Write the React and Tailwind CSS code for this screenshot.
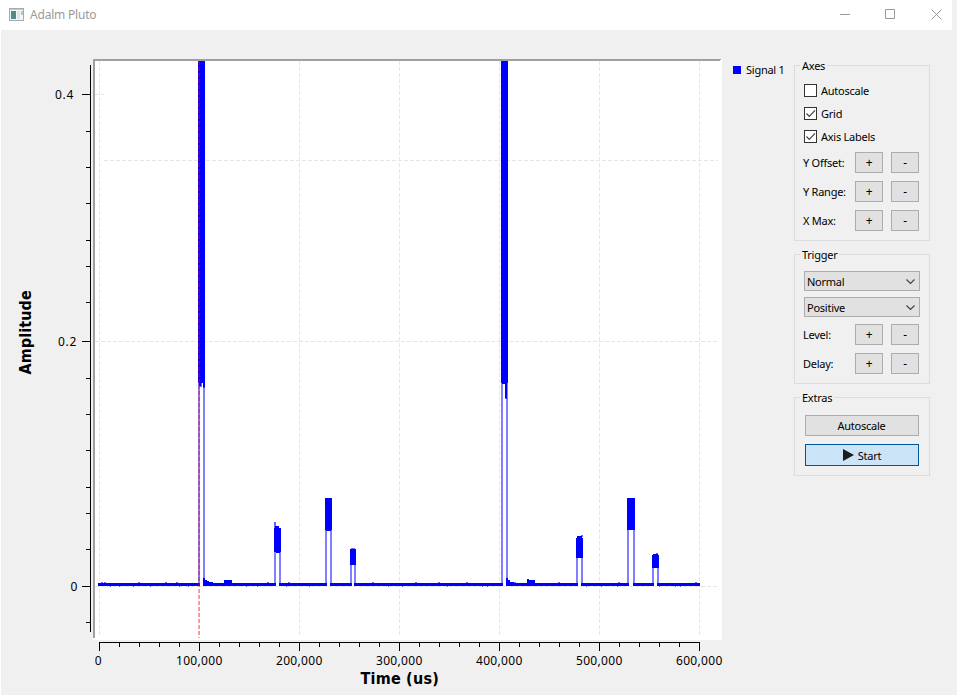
import React, { useState } from 'react';

const X_TICKS = [
  { x: 98.5, label: '0' },
  { x: 199.5, label: '100,000' },
  { x: 299.5, label: '200,000' },
  { x: 399.5, label: '300,000' },
  { x: 499.5, label: '400,000' },
  { x: 599.5, label: '500,000' },
  { x: 699.5, label: '600,000' }
];

const Y_TICKS = [
  { y: 64.5, label: '0.4', end: 73, width: 18 },
  { y: 311.5, label: '0.2', end: 76, width: 18 },
  { y: 556.5, label: '0', end: 77, width: 7 }
];

const Y_MINOR = [101.5, 137.5, 173.5, 210.5, 236.5, 272.5, 348.5, 384.5, 420.5, 457.5, 483.5, 519.5, 592.5];

const X_MINOR = [];
for (let i = 0; i < 30; i++) {
  if (i % 5 !== 0) X_MINOR.push(99.5 + i * 20);
}

// left, right, top and bottom of the solid part of each pulse
const PULSES = [
  { l: 198, r: 205, top: 31, bottom: 353 },
  { l: 274, r: 281, top: 498, bottom: 522 },
  { l: 325, r: 332, top: 468, bottom: 500 },
  { l: 350, r: 356, top: 519, bottom: 535 },
  { l: 501, r: 508, top: 31, bottom: 353 },
  { l: 576, r: 583, top: 508, bottom: 528 },
  { l: 627, r: 635, top: 468, bottom: 500 },
  { l: 652, r: 659, top: 525, bottom: 538 }
];

const BASELINE = [
  [98, 200],
  [203, 276],
  [279, 327],
  [330, 352],
  [354, 503],
  [506, 578],
  [581, 629],
  [633, 654],
  [657, 700]
];

const NOISE_UP = [101, 104, 138, 165, 176, 267, 288, 372, 415, 438, 466, 514, 558, 618, 695];
const NOISE_DOWN = [110, 119, 133, 150, 179, 188, 246, 257, 286, 309, 388, 402, 447, 482, 487, 586, 601, 617, 659, 675, 680];

const Chart = () => (
  <svg
    width="725"
    height="665"
    viewBox="0 0 725 665"
    className="block shrink-0 font-['Noto_Sans',sans-serif]"
    shapeRendering="crispEdges"
  >
    {/* Canvas frame */}
    <rect x="93" y="29" width="629" height="581" fill="#fff" />
    <path d="M93 29H721V30H720V31H95V608H93Z" fill="#a0a0a0" />

    {/* Grid */}
    <g stroke="#e6e6e6" strokeDasharray="4 2">
      {X_TICKS.map(({ x, label }) => (
        <path key={label} d={`M${label === '0' ? 99.5 : x} 31V607`} />
      ))}
      <path d="M95 64.5H104M104 130.5H718M95 311.5H718M95 556.5H718" />
    </g>

    {/* Signal */}
    <g fill="#00f">
      {PULSES.map(({ l, r, top, bottom }) => (
        <g key={l}>
          <rect x={l} y={top} width={r - l} height={bottom - top} />
          <g fillOpacity="0.5">
            <rect x={l} y={bottom} width="2" height={556 - bottom} />
            <rect x={r - 2} y={bottom} width="2" height={556 - bottom} />
          </g>
        </g>
      ))}
      {BASELINE.map(([from, to]) => (
        <rect key={from} x={from} y="553" width={to - from} height="3" />
      ))}
      <path d="M203 548H205V550H207V551H209V552H213V553H203ZM224 550H232V553H224ZM506 548H508V550H510V552H514V553H506ZM527 549H529V550H535V553H527Z" />
      <path d="M199 353H201V356H199ZM201 353H203V350H205V357H203V353H201ZM275 496H279V498H275ZM276 522H280V523H276ZM326 500H331V501H326ZM502 353H505V354H502ZM505 353H507V368H505ZM577 506H582V508H577ZM653 524H658V525H653Z" />
      <g fillOpacity="0.6">
        <path d="M274 492H276V498H274ZM200 353H202V357H200ZM203 356H205V358H203ZM505 366H507V369H505ZM351 518H355V519H351ZM581 505H583V507H581ZM656 523H658V525H656Z" />
        {NOISE_UP.map((x) => (
          <rect key={x} x={x} y="552" width="2" height="1" />
        ))}
        {NOISE_DOWN.map((x) => (
          <rect key={x} x={x} y="556" width="1" height="1" />
        ))}
      </g>
    </g>

    {/* Trigger marker */}
    <path d="M199 31V608" stroke="#f00" strokeOpacity="0.35" strokeWidth="2" strokeDasharray="4 2" />

    {/* Axes */}
    <g stroke="#000">
      <path d="M90.5 35V602" />
      <path d="M99 612.5H700" />
      {Y_TICKS.map(({ y }) => (
        <path key={y} d={`M82 ${y}H90`} />
      ))}
      {Y_MINOR.map((y) => (
        <path key={y} d={`M86 ${y}H90`} />
      ))}
      {X_TICKS.map(({ x, label }) => (
        <path key={label} d={`M${label === '0' ? 99.5 : x} 613V621`} />
      ))}
      {X_MINOR.map((x) => (
        <path key={x} d={`M${x} 613V617`} />
      ))}
    </g>
    <g fontSize="12">
      {Y_TICKS.map(({ y, label, end, width }) => (
        <text key={label} x={end} y={y + 4.5} textAnchor="end" textLength={width}>
          {label}
        </text>
      ))}
      {X_TICKS.map(({ x, label }) => (
        <text key={label} x={x - 0.5} y="635" textAnchor="middle" textLength={label === '0' ? 7 : 46}>
          {label}
        </text>
      ))}
    </g>
    <g fontSize="16" fontWeight="bold" textAnchor="middle" className="font-['DejaVu_Sans_Condensed','DejaVu_Sans',sans-serif]">
      <text x="399.5" y="654" textLength="78">
        Time (us)
      </text>
      <text transform="translate(31 302.5) rotate(-90)" textLength="84">
        Amplitude
      </text>
    </g>
  </svg>
);

const Group = ({ title, className, children }) => (
  <fieldset className={`relative w-[136px] border border-[#dcdcdc] ${className}`}>
    <span className="absolute -top-[7px] left-[5px] bg-[#f0f0f0] px-[2px] leading-[14px]">{title}</span>
    {children}
  </fieldset>
);

const Checkbox = ({ label, checked, onChange }) => (
  <label className="flex h-[23px] items-center">
    <input type="checkbox" className="sr-only" checked={checked} onChange={onChange} />
    <span className="mr-[4px] mb-[2px] h-[13px] w-[13px] border border-[#333] bg-white">
      {checked && (
        <svg width="11" height="11" viewBox="0 0 11 11" fill="none" stroke="#444" strokeWidth="1.2">
          <path d="M1.5 5.5 4.3 8.3 10 2.3" />
        </svg>
      )}
    </span>
    {label}
  </label>
);

const Stepper = ({ label }) => (
  <div className="mb-[8px] flex h-[21px] items-center">
    <span className="-ml-px w-[52px] whitespace-nowrap pt-px">{label}</span>
    <button className="mr-[8px] h-[21px] w-[28px] border border-[#adadad] bg-[#e1e1e1] pt-px text-[12px]">+</button>
    <button className="h-[21px] w-[28px] border border-[#adadad] bg-[#e1e1e1] pt-px text-[12px]">-</button>
  </div>
);

const Dropdown = ({ value }) => (
  <button className="mb-[6px] flex h-[20px] w-[116px] items-center justify-between border border-[#adadad] bg-[#e1e1e1] pt-[2px] pl-[2px] pr-[4px]">
    {value}
    <svg width="9" height="6" viewBox="0 0 9 6" fill="none" stroke="#444" strokeWidth="1.2">
      <path d="M0.5 0.5 4.5 4.5 8.5 0.5" />
    </svg>
  </button>
);

const App = () => {
  const [autoscale, setAutoscale] = useState(false);
  const [grid, setGrid] = useState(true);
  const [axisLabels, setAxisLabels] = useState(true);

  return (
    <div className="flex h-[695px] w-[957px] flex-col overflow-hidden bg-[#f0f0f0] font-['Noto_Sans',sans-serif] text-[11px] tracking-[-0.25px] text-black">
      {/* Title bar */}
      <header className="flex h-[30px] w-[952px] shrink-0 items-center bg-white pl-[9px] pr-[10px] text-[#999]">
        <svg width="15" height="13" viewBox="0 0 15 13" className="mb-[2px] mr-[6px]">
          <rect x="0.5" y="0.5" width="14" height="12" fill="#f6f6f6" stroke="#a5a9b5" />
          <rect x="1" y="1" width="13" height="1" fill="#c3c7d0" />
          <rect x="2" y="3" width="5" height="8" fill="#4a9184" />
          <rect x="8" y="3" width="3" height="8" fill="#e2e4e6" />
          <rect x="12" y="3" width="2" height="4" fill="#a9cfc0" />
        </svg>
        <span className="text-[12px] tracking-[-0.2px]">Adalm Pluto</span>
        <svg width="102" height="11" viewBox="0 0 102 11" fill="none" stroke="#999" className="mb-[2px] ml-auto">
          <path d="M0 5.5H10M45.5 0.5H54.5V9.5H45.5ZM91.5 0.5 101.5 10.5M101.5 0.5 91.5 10.5" />
        </svg>
      </header>

      <main className="flex h-[665px] border-l border-white">
        <div className="-ml-px flex">
          <Chart />
        </div>

        {/* Legend */}
        <div className="mt-[33px] flex h-[14px] w-[69px] items-center pl-[8px]">
          <span className="mr-[5px] h-[8px] w-[8px] bg-[#00f]" />
          <span className="whitespace-nowrap pt-px">Signal 1</span>
        </div>

        {/* Controls */}
        <aside className="mt-[35px] flex flex-col gap-[13px]">
          <Group title="Axes" className="h-[176px] pl-[9px] pt-[14px]">
            <Checkbox label="Autoscale" checked={autoscale} onChange={() => setAutoscale(!autoscale)} />
            <Checkbox label="Grid" checked={grid} onChange={() => setGrid(!grid)} />
            <Checkbox label="Axis Labels" checked={axisLabels} onChange={() => setAxisLabels(!axisLabels)} />
            <div className="pt-[3px]">
              <Stepper label="Y Offset:" />
              <Stepper label="Y Range:" />
              <Stepper label="X Max:" />
            </div>
          </Group>

          <Group title="Trigger" className="h-[130px] pl-[9px] pt-[16px]">
            <Dropdown value="Normal" />
            <Dropdown value="Positive" />
            <div className="pt-px">
              <Stepper label="Level:" />
              <Stepper label="Delay:" />
            </div>
          </Group>

          <Group title="Extras" className="h-[79px] pl-[10px] pt-[17px]">
            <button className="mb-[8px] block h-[21px] w-[114px] border border-[#adadad] bg-[#e1e1e1] pt-px pr-px">Autoscale</button>
            <button className="flex h-[22px] w-[114px] items-center justify-center border border-[#00559b] bg-[#cce4f7] pt-[2px]">
              <svg width="11" height="12" viewBox="0 0 11 12" className="mb-[3px] mr-[4px]">
                <path d="M0 0 11 6 0 12Z" fill="#1c1c1c" />
              </svg>
              Start
            </button>
          </Group>
        </aside>
      </main>
    </div>
  );
};

export default App;
